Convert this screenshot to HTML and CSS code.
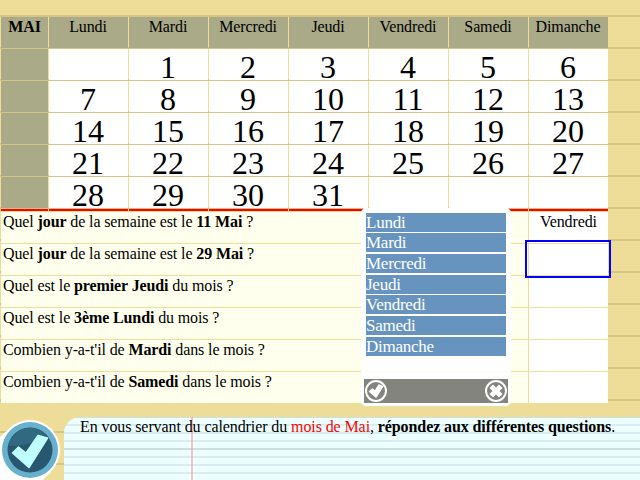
FILE: index.html
```
<!DOCTYPE html>
<html lang="fr">
<head>
<meta charset="utf-8">
<title>Calendrier - Mai</title>
<link rel="stylesheet" href="styles.css">
</head>
<body>
<main class="sheet">
  <section class="calendar">
    <div class="head month">MAI</div><div class="head">Lundi</div><div class="head">Mardi</div><div class="head">Mercredi</div><div class="head">Jeudi</div><div class="head">Vendredi</div><div class="head">Samedi</div><div class="head">Dimanche</div>
    <div class="head"></div><div></div><div>1</div><div>2</div><div>3</div><div>4</div><div>5</div><div>6</div>
    <div class="head"></div><div>7</div><div>8</div><div>9</div><div>10</div><div>11</div><div>12</div><div>13</div>
    <div class="head"></div><div>14</div><div>15</div><div>16</div><div>17</div><div>18</div><div>19</div><div>20</div>
    <div class="head"></div><div>21</div><div>22</div><div>23</div><div>24</div><div>25</div><div>26</div><div>27</div>
    <div class="head"></div><div>28</div><div>29</div><div>30</div><div>31</div><div></div><div></div><div></div>
    <div class="rule"></div><div class="rule"></div><div class="rule"></div><div class="rule"></div><div class="rule"></div><div class="rule"></div><div class="rule"></div><div class="rule"></div>
  </section>
  <section class="questions">
    <div class="question">Quel <b>jour</b> de la semaine est le <b>11 Mai</b> ?</div><div class="answer">Vendredi</div>
    <div class="question">Quel <b>jour</b> de la semaine est le <b>29 Mai</b> ?</div><div class="answer active"></div>
    <div class="question">Quel est le <b>premier Jeudi</b> du mois ?</div><div class="answer"></div>
    <div class="question">Quel est le <b>3ème Lundi</b> du mois ?</div><div class="answer"></div>
    <div class="question">Combien y-a-t'il de <b>Mardi</b> dans le mois ?</div><div class="answer"></div>
    <div class="question">Combien y-a-t'il de <b>Samedi</b> dans le mois ?</div><div class="answer"></div>
  </section>
</main>
<footer class="footer">
  <div class="confirm">
    <svg width="64" height="64" viewBox="0 416 64 64">
      <circle cx="30" cy="450" r="30" fill="#fff"/>
      <path d="M0 437L9 429L30 450L51 472L43 480H0Z" fill="#fff"/>
      <circle cx="30" cy="450" r="28" fill="#68b0cc"/>
      <circle cx="30" cy="450" r="22.500" fill="#285870"/>
      <path d="M8 445.500A22.500 22.500 0 0 1 46 434.500Q28 448 8 445.500Z" fill="#316a80"/>
      <path d="M12.500 453L18.500 447L26 453L38 435.500L47.500 438L29 467.500Z" fill="#c0ffff" stroke="#c0ffff" stroke-width="1.500" stroke-linejoin="round"/>
    </svg>
  </div>
  <p class="instruction">En vous servant du calendrier du <span class="red">mois de Mai</span>, <b>répondez aux différentes questions</b>.</p>
</footer>
<div class="picker">
  <ul class="options"><li>Lundi</li><li>Mardi</li><li>Mercredi</li><li>Jeudi</li><li>Vendredi</li><li>Samedi</li><li>Dimanche</li></ul>
  <div class="actions">
    <svg width="24" height="24" viewBox="0 0 24 24"><circle cx="12" cy="12" r="10" fill="none" stroke="#fff" stroke-width="2"/><path d="M5.500 12.500L8.500 10L11 12.500L15 6L18.500 7.500L12 18Z" fill="#fff" stroke="#fff" stroke-width="1.500" stroke-linejoin="round"/></svg>
    <svg width="24" height="24" viewBox="0 0 24 24"><circle cx="12" cy="12" r="10" fill="none" stroke="#fff" stroke-width="2"/><path d="M7.200 7.200L16.800 16.800M16.800 7.200L7.200 16.800" stroke="#fff" stroke-width="5"/></svg>
  </div>
</div>
</body>
</html>
```
FILE: styles.css
```
* { box-sizing: border-box; }
body {
  margin: 0;
  width: 640px;
  height: 480px;
  overflow: hidden;
  position: relative;
  display: flex;
  flex-direction: column;
  font: 16px/18px "Liberation Serif", serif;
  letter-spacing: -0.115px;
  color: #000;
  background: repeating-linear-gradient(#eedd99 0 15px, #d5c484 15px 17px, #eedd99 17px 32px);
}
.sheet { padding: 17px 0 0 1px; height: 417px; width: 608px; }
.calendar {
  display: grid;
  grid-template-columns: 47px repeat(7, 79px);
  grid-template-rows: repeat(6, 31px) 2px;
  gap: 1px;
}
.calendar > div {
  background: #fff;
  text-align: center;
  font-size: 32px;
  line-height: 36px;
  letter-spacing: 0;
  padding-right: 1px;
}
.calendar > .head { background: #aaaa88; font-size: 16px; line-height: 20px; letter-spacing: -0.115px; }
.calendar > .month { font-weight: bold; padding-right: 0; }
.calendar > .rule { background: #f00; }
.questions {
  display: grid;
  grid-template-columns: 527px 79px;
  grid-auto-rows: 31px;
  gap: 1px;
  padding-top: 1px;
  background: #eedd99;
}
.question { background: #ffffee; padding: 1px 2px; }
.answer { background: #fff; text-align: center; padding-top: 1px; }
.active { position: relative; }
.active::after {
  content: "";
  position: absolute;
  z-index: 1;
  top: -4px;
  left: -4px;
  width: 82px;
  height: 34px;
  border: 2px solid #00f;
  box-sizing: content-box;
}
.footer { height: 63px; display: flex; }
.confirm { width: 64px; height: 63px; }
.confirm svg { display: block; margin-top: -1px; }
.instruction {
  flex: 1;
  margin: 0;
  padding: 1px 0 0 16px;
  white-space: nowrap;
  letter-spacing: -0.095px;
  border-top-left-radius: 16px;
  background:
    linear-gradient(rgba(255, 136, 136, .5), rgba(255, 136, 136, .5)) 127px 0 / 2px 100% no-repeat,
    repeating-linear-gradient(#cce0e0 0 2px, transparent 2px 32px) 0 -1px / 100% 64px,
    repeating-linear-gradient(#d8eef2 0 2px, #eeffff 2px 8px) 0 -1px / 100% 64px;
}
.red { color: #f00; }
.picker {
  position: absolute;
  z-index: 2;
  left: 361px;
  top: 208px;
  width: 150px;
  height: 198px;
  border: 3px solid #fff;
  border-radius: 5px;
  background: rgba(255, 255, 255, .9);
  background-clip: padding-box;
  display: flex;
  flex-direction: column;
  justify-content: space-between;
}
.options {
  list-style: none;
  margin: 0;
  padding: 1.7px 2px 0;
  display: flex;
  flex-direction: column;
  gap: 1.67px;
}
.options li { height: 19px; background: #6694bf; color: #fff; font-size: 17px; line-height: 19px; letter-spacing: -0.25px; }
.actions { height: 24px; background: #84847e; display: flex; justify-content: space-between; }
```
